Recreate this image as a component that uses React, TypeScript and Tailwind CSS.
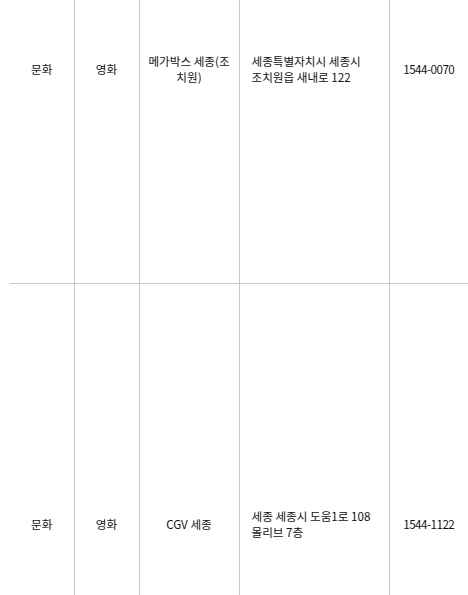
const rows = [
  {
    cat: "문화",
    sub: "영화",
    name: ["메가박스 세종(조", "치원)"],
    addr: ["세종특별자치시 세종시", "조치원읍 새내로 122"],
    tel: "1544-0070",
    h: "h-[427px]",
  },
  {
    cat: "문화",
    sub: "영화",
    name: ["CGV 세종"],
    addr: ["세종 세종시 도움1로 108", "몰리브 7층"],
    tel: "1544-1122",
    h: "h-[481px]",
  },
];

const Lines = ({ lines }: { lines: string[] }) => (
  <>
    {lines.map((l, i) => (
      <span key={i} className="block whitespace-nowrap">
        {l}
      </span>
    ))}
  </>
);

export default function App() {
  return (
    <div className="w-[468px] h-[595px] overflow-hidden bg-white pl-[10px]">
      <table
        className="-mt-[144px] w-[458px] table-fixed border-collapse text-[11.6px] leading-4 text-[#111]"
        style={{ fontFamily: '"Noto Sans CJK KR", "Noto Sans", sans-serif' }}
      >
        <colgroup>
          <col className="w-[64px]" />
          <col className="w-[65px]" />
          <col className="w-[100px]" />
          <col className="w-[150px]" />
          <col className="w-[79px]" />
        </colgroup>
        <tbody>
          {rows.map((r, i) => (
            <tr key={i} className={`${r.h} ${i === 0 ? "border-b border-[#c8c8c8]" : ""}`}>
              <td className="border-r border-[#c8c8c8] text-center align-middle">{r.cat}</td>
              <td className="border-r border-[#c8c8c8] text-center align-middle">{r.sub}</td>
              <td className="border-r border-[#c8c8c8] px-2 text-center align-middle">
                <Lines lines={r.name} />
              </td>
              <td className="border-r border-[#c8c8c8] px-3 text-left align-middle">
                <Lines lines={r.addr} />
              </td>
              <td className="text-center align-middle tracking-[-0.5px]">{r.tel}</td>
            </tr>
          ))}
        </tbody>
      </table>
    </div>
  );
}
